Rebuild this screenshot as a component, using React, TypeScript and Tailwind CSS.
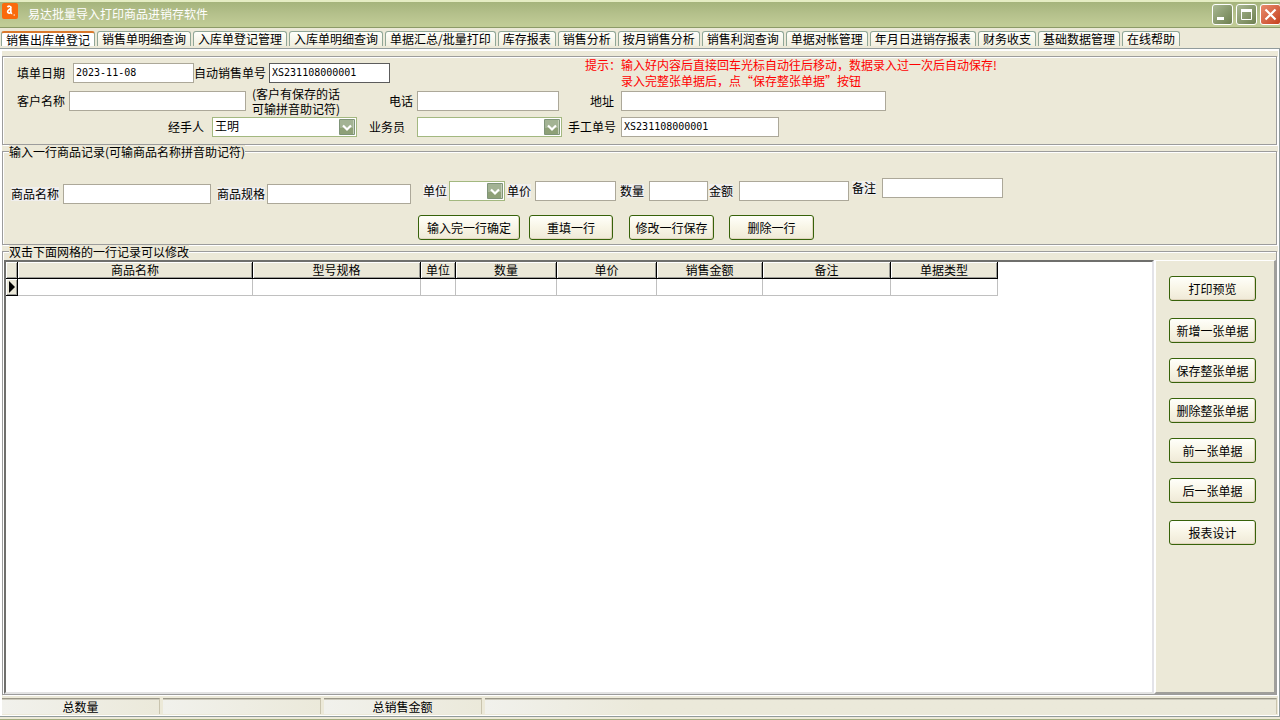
import type { ReactNode } from "react";

const tabs = [
  "销售出库单登记",
  "销售单明细查询",
  "入库单登记管理",
  "入库单明细查询",
  "单据汇总/批量打印",
  "库存报表",
  "销售分析",
  "按月销售分析",
  "销售利润查询",
  "单据对帐管理",
  "年月日进销存报表",
  "财务收支",
  "基础数据管理",
  "在线帮助",
];

const columns = [
  { name: "商品名称", width: "w-[235px]" },
  { name: "型号规格", width: "w-[168px]" },
  { name: "单位", width: "w-[35px]" },
  { name: "数量", width: "w-[101px]" },
  { name: "单价", width: "w-[100px]" },
  { name: "销售金额", width: "w-[106px]" },
  { name: "备注", width: "w-[128px]" },
  { name: "单据类型", width: "w-[107px]" },
];

const headCell =
  "border-r border-b border-black p-0 font-normal shadow-[inset_1px_1px_0_#fff,inset_-1px_-1px_0_#9d9d97] bg-[#ebe8d8]";

const etched =
  "border border-[#9c9c9c] shadow-[inset_1px_1px_0_#fff,1px_1px_0_#fff]";

function Group({ title, className, children }: { title?: string; className: string; children: ReactNode }) {
  return (
    <section aria-label={title} className={`mr-px flex flex-col ${etched} ${className}`}>
      {title && (
        <h2 className="-mt-[7px] ml-1.5 h-3.5 w-fit shrink-0 bg-[#ece9d8] text-[12px] leading-[13px] font-normal">
          {title}
        </h2>
      )}
      {children}
    </section>
  );
}

function TextField({
  id,
  label,
  labelClass = "",
  className,
  value = "",
  border = "border-[#aca899]",
}: {
  id: string;
  label: string;
  labelClass?: string;
  className: string;
  value?: string;
  border?: string;
}) {
  return (
    <>
      <label htmlFor={id} className={`shrink-0 whitespace-nowrap leading-[14px] ${labelClass}`}>
        {label}
      </label>
      <input
        id={id}
        defaultValue={value}
        className={`h-5 shrink-0 border bg-white pl-0.5 pb-0.5 font-['DejaVu_Sans_Mono','Noto_Sans_CJK_SC',monospace] text-[10px] leading-4 outline-none ${border} ${className}`}
      />
    </>
  );
}

function SelectField({
  id,
  label,
  labelClass = "",
  className,
  value = "",
}: {
  id: string;
  label: string;
  labelClass?: string;
  className: string;
  value?: string;
}) {
  return (
    <>
      <label htmlFor={id} className={`shrink-0 whitespace-nowrap leading-[14px] ${labelClass}`}>
        {label}
      </label>
      <div className={`relative shrink-0 ${className}`}>
        <select
          id={id}
          defaultValue={value}
          className="block h-5 w-full appearance-none border border-[#a3b880] bg-white pl-0.5 pb-0.5 text-[12px] leading-4 outline-none"
        >
          <option>{value}</option>
        </select>
        <svg
          viewBox="0 0 16 16"
          className="pointer-events-none absolute top-0.5 right-0.5 size-4"
          aria-hidden="true"
        >
          <rect x="0" y="0" width="16" height="16" rx="1" fill="#7f9478" />
          <rect x="1" y="1" width="14" height="14" fill="#a3b394" />
          <rect x="1" y="9" width="13" height="6" fill="#8ea077" />
          <path d="M14.500 1v14" stroke="#c5cfba" />
          <path d="M4 6.5l4 4 4-4" fill="none" stroke="#fff" strokeWidth="2.2" />
        </svg>
      </div>
    </>
  );
}

function Button({ children, className }: { children: string; className: string }) {
  return (
    <button
      type="button"
      className={`h-[25px] shrink-0 rounded-[3px] border border-[#37620a] bg-linear-to-b from-[#fffffa] via-[#f8f5e6] to-[#efe9d7] text-[12px] leading-4 whitespace-nowrap shadow-[inset_-1px_-1px_0_#e0d5bd] ${className}`}
    >
      {children}
    </button>
  );
}

function CaptionButton({ label, tone, children }: { label: string; tone: string; children: ReactNode }) {
  return (
    <button
      type="button"
      aria-label={label}
      className={`size-[21px] rounded-[3px] border border-white ${tone}`}
    >
      <svg viewBox="0 0 19 19" className="size-[19px]" aria-hidden="true">
        {children}
      </svg>
    </button>
  );
}

function StatusPanel({ className, children }: { className: string; children?: ReactNode }) {
  return (
    <div
      className={`flex h-4 items-center justify-center border-t border-r border-t-[#9a9788] border-r-[#c9c4ae] bg-linear-to-r from-[#f1f1ec] to-[#ebe9da] to-[160px] leading-[14px] shadow-[inset_0_1px_0_#cbc8ba] ${className}`}
    >
      {children}
    </div>
  );
}

export default function App() {
  return (
    <div
      lang="zh-CN"
      className="flex min-h-screen flex-col overflow-hidden border-b border-[#a3ad80] bg-[#ece9d8] pb-0.5 font-['Noto_Sans_CJK_SC',sans-serif] text-[12px] leading-4 text-black"
    >
      <header className="flex h-7 shrink-0 items-start border-t-2 border-b border-t-[#e5edc4] border-b-[#8c9a67] bg-linear-to-b from-[#a5b47c] from-0% via-[#b5c18c] via-50% to-[#c0cb95] to-90% pl-0.5">
        <svg viewBox="0 0 16 16" className="mt-px size-4" aria-hidden="true">
          <rect width="16" height="16" rx="2" fill="#fa6a0c" />
          <path
            d="M5.500 4.200c1-1.500 3.500-1.200 3.500.3 0 1.200-1 1.500-2 2.200-1.300.9-1.800 2-.9 3 .9.900 2.600.4 2.700-1.200V4.500M8.800 8.500c0 1.400.4 2 1.400 1.800"
            fill="none"
            stroke="#fff"
            strokeWidth="1.700"
          />
          <path d="M11.500 12h1.500" stroke="#fff" />
        </svg>
        <h1 className="mt-1 ml-2.5 text-[12px] leading-4 font-normal text-white">易达批量导入打印商品进销存软件</h1>
        <div className="mt-0.5 -mr-px ml-auto flex gap-[3px]">
          <CaptionButton label="最小化" tone="bg-linear-to-br from-[#a9b893] to-[#6f8050]">
            <rect x="4" y="12" width="7" height="3" fill="#fff" />
          </CaptionButton>
          <CaptionButton label="最大化" tone="bg-linear-to-br from-[#a9b893] to-[#6f8050]">
            <path d="M4.500 5v9.500h10V5" fill="none" stroke="#fff" />
            <rect x="4" y="4" width="11" height="3" fill="#fff" />
          </CaptionButton>
          <CaptionButton label="关闭" tone="bg-linear-to-br from-[#e88a6c] to-[#c5401b]">
            <path d="M4.500 4.500l10 10M14.500 4.500l-10 10" stroke="#fff" strokeWidth="2.200" />
          </CaptionButton>
        </div>
      </header>

      <nav role="tablist" className="flex h-5 shrink-0 items-start gap-0.5 pt-[3px] pl-px">
        {tabs.map((tab, i) => (
          <button
            key={tab}
            type="button"
            role="tab"
            aria-selected={i === 0}
            className={
              i === 0
                ? "h-[15px] shrink-0 rounded-t-[3px] border-x border-t-2 border-x-[#91a797] border-t-[#d9782c] bg-white px-1 leading-[12px] whitespace-nowrap"
                : "h-[15px] shrink-0 rounded-t-[3px] border-x border-t border-[#91a797] bg-linear-to-b from-[#fffffb] to-[#f1efe0] px-1 leading-[14px] whitespace-nowrap"
            }
          >
            {tab}
          </button>
        ))}
      </nav>

      <main className="flex grow flex-col border-t border-r border-b border-[#919b9c]">
        <div className="flex grow flex-col border-2 border-r border-b border-white pt-[5px]">
          <Group className="h-[89px] shrink-0">
            <div className="flex h-8 items-center">
              <TextField id="date" label="填单日期" labelClass="ml-3.5" className="ml-2 w-[121px]" value="2023-11-08" />
              <TextField
                id="order-no"
                label="自动销售单号"
                className="ml-[3px] w-[121px]"
                value="XS231108000001"
                border="border-[#5c5c5c]"
              />
              <p className="ml-[195px] flex shrink-0 whitespace-nowrap text-[#ff0000]">
                <span>提示：</span>
                <span>
                  输入好内容后直接回车光标自动往后移动，数据录入过一次后自动保存!
                  <br />
                  录入完整张单据后，点“保存整张单据”按钮
                </span>
              </p>
            </div>
            <div className="mt-px flex h-[22px] items-center">
              <TextField id="customer" label="客户名称" labelClass="ml-3.5" className="ml-1 w-[177px]" />
              <p className="ml-1.5 w-[137px] shrink-0 leading-[15px] whitespace-nowrap">
                (客户有保存的话
                <br />
                可输拼音助记符)
              </p>
              <TextField id="phone" label="电话" className="ml-1 w-[142px]" />
              <TextField id="address" label="地址" labelClass="ml-[31px]" className="ml-[7px] w-[265px]" />
            </div>
            <div className="mt-1 flex h-[22px] items-center">
              <SelectField id="handler" label="经手人" labelClass="ml-[165px]" className="ml-2 w-[145px]" value="王明" />
              <SelectField id="clerk" label="业务员" labelClass="ml-3" className="ml-3 w-[145px]" />
              <TextField
                id="manual-no"
                label="手工单号"
                labelClass="ml-1.5"
                className="ml-[5px] w-[158px]"
                value="XS231108000001"
              />
            </div>
          </Group>

          <Group title="输入一行商品记录(可输商品名称拼音助记符)" className="mt-1.5 h-[94px] shrink-0">
            <div className="flex items-start pt-[19px]">
              <div className="flex items-center pt-1.5">
                <TextField id="name" label="商品名称" labelClass="ml-2 bg-[#f0efee]" className="ml-1 w-[148px]" />
                <TextField id="spec" label="商品规格" labelClass="ml-1.5 bg-[#f0efee]" className="ml-0.5 w-[144px]" />
              </div>
              <div className="flex items-center pt-[3px]">
                <SelectField id="unit" label="单位" labelClass="ml-3 bg-[#f0efee]" className="ml-0.5 w-14" />
                <TextField id="price" label="单价" labelClass="ml-0.5 bg-[#f0efee]" className="ml-1 w-[81px]" />
                <TextField id="qty" label="数量" labelClass="ml-1 bg-[#f0efee]" className="ml-[5px] w-[59px]" />
                <TextField id="amount" label="金额" labelClass="ml-px bg-[#f0efee]" className="ml-1.5 w-[110px]" />
              </div>
              <div className="flex items-center">
                <TextField id="remark" label="备注" labelClass="ml-[3px] bg-[#f0efee]" className="ml-1.5 w-[121px]" />
              </div>
            </div>
            <div className="mt-[11px] ml-[415px] flex">
              <Button className="w-[102px]">输入完一行确定</Button>
              <Button className="ml-[9px] w-[84px]">重填一行</Button>
              <Button className="ml-4 w-[85px]">修改一行保存</Button>
              <Button className="ml-[15px] w-[85px]">删除一行</Button>
            </div>
          </Group>

          <Group title="双击下面网格的一行记录可以修改" className="mt-1.5 grow">
            <div className="flex grow pt-px pl-px">
              <div className="min-w-0 grow border-2 border-t-[#6f6f6c] border-r-[#e3e3e8] border-b-[#e3e3e3] border-l-[#6f6f6c] bg-white">
                <table className="w-[992px] table-fixed border-separate border-spacing-0">
                  <thead>
                    <tr className="h-[17px]">
                      <th className={`w-3 ${headCell}`} aria-label="当前行" />
                      {columns.map((c) => (
                        <th key={c.name} scope="col" className={`${c.width} ${headCell} leading-4`}>
                          {c.name}
                        </th>
                      ))}
                    </tr>
                  </thead>
                  <tbody>
                    <tr className="h-[17px]">
                      <td className={headCell}>
                        <svg viewBox="0 0 11 16" className="block h-4 w-[11px]" aria-hidden="true">
                          <path d="M3 2v12l6-6z" fill="#000" />
                        </svg>
                      </td>
                      {columns.map((c) => (
                        <td key={c.name} className="border-r border-b border-[#c0c0c0] p-0" />
                      ))}
                    </tr>
                  </tbody>
                </table>
              </div>
              <aside className="flex w-[122px] shrink-0 flex-col items-start gap-[17px] border-t border-r-2 border-b-2 border-l-2 border-t-white border-r-[#a09f9b] border-b-[#a09f9b] border-l-white pt-[15px] pl-[13px]">
                <Button className="w-[87px]">打印预览</Button>
                <div className="flex flex-col gap-[15px]">
                  <Button className="w-[87px]">新增一张单据</Button>
                  <Button className="w-[87px]">保存整张单据</Button>
                  <Button className="w-[87px]">删除整张单据</Button>
                  <Button className="w-[87px]">前一张单据</Button>
                  <Button className="w-[87px]">后一张单据</Button>
                </div>
                <Button className="w-[87px]">报表设计</Button>
              </aside>
            </div>
          </Group>

          <footer className="mt-[3px] flex h-[17px] shrink-0 gap-[3px] pr-px">
            <StatusPanel className="w-[158px]">总数量</StatusPanel>
            <StatusPanel className="w-[158px]" />
            <StatusPanel className="w-[158px]">总销售金额</StatusPanel>
            <StatusPanel className="grow" />
          </footer>
        </div>
      </main>
    </div>
  );
}
